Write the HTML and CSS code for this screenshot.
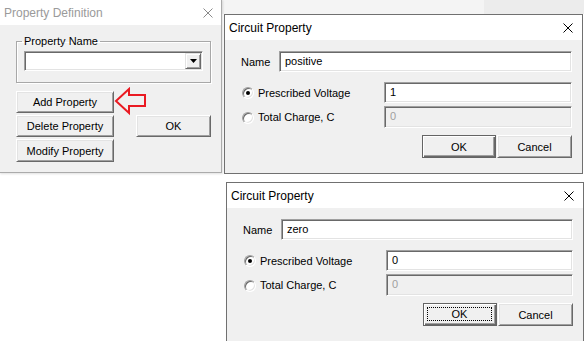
FILE: index.html
```html
<!DOCTYPE html>
<html>
<head>
<meta charset="utf-8">
<link rel="stylesheet" href="styles.css">
</head>
<body>
<div class="desk">
  <div class="backdrop"><div class="backdrop-right"></div></div>

  <div class="win win-def inactive">
    <div class="titlebar">
      <span class="title">Property Definition</span>
      <svg class="close" width="10" height="10" viewBox="0 0 10 10"><path d="M0.5 0.5 L9.5 9.5 M9.5 0.5 L0.5 9.5" /></svg>
    </div>
    <div class="def-body">
      <fieldset class="group">
        <legend>Property Name</legend>
        <div class="combo">
          <div class="combo-field"></div>
          <div class="combo-btn"><svg width="7" height="4" viewBox="0 0 7 4"><path d="M0 0 H7 L3.5 4 Z" fill="#000"/></svg></div>
        </div>
      </fieldset>
      <div class="btn-grid">
        <button class="btn b-add">Add Property</button>
        <button class="btn b-del">Delete Property</button>
        <button class="btn b-ok">OK</button>
        <button class="btn b-mod">Modify Property</button>
      </div>
    </div>
    <svg class="arrow" width="34" height="30" viewBox="113 87 34 30"><polygon points="116,101 129,89 129,95 145,95 145,106 129,106 129,113" fill="none" stroke="#ea1a22" stroke-width="2"/></svg>
  </div>

  <div class="win win-cp1">
    <div class="titlebar">
      <span class="title">Circuit Property</span>
      <svg class="close" width="10" height="10" viewBox="0 0 10 10"><path d="M0.5 0.5 L9.5 9.5 M9.5 0.5 L0.5 9.5" /></svg>
    </div>
    <div class="cp-body">
      <div class="row row-name">
        <span class="lbl-name">Name</span>
        <div class="field">positive</div>
      </div>
      <div class="row row-v">
        <div class="radio-lbl"><span class="radio checked"></span><span>Prescribed Voltage</span></div>
        <div class="field">1</div>
      </div>
      <div class="row row-c">
        <div class="radio-lbl"><span class="radio"></span><span>Total Charge, C</span></div>
        <div class="field disabled">0</div>
      </div>
      <div class="btn-row">
        <button class="btn btn-def">OK</button>
        <button class="btn">Cancel</button>
      </div>
    </div>
  </div>

  <div class="win win-cp2">
    <div class="titlebar">
      <span class="title">Circuit Property</span>
      <svg class="close" width="10" height="10" viewBox="0 0 10 10"><path d="M0.5 0.5 L9.5 9.5 M9.5 0.5 L0.5 9.5" /></svg>
    </div>
    <div class="cp-body">
      <div class="row row-name">
        <span class="lbl-name">Name</span>
        <div class="field">zero</div>
      </div>
      <div class="row row-v">
        <div class="radio-lbl"><span class="radio checked"></span><span>Prescribed Voltage</span></div>
        <div class="field">0</div>
      </div>
      <div class="row row-c">
        <div class="radio-lbl"><span class="radio"></span><span>Total Charge, C</span></div>
        <div class="field disabled">0</div>
      </div>
      <div class="btn-row">
        <button class="btn btn-def focus"><span class="focus-rect">OK</span></button>
        <button class="btn">Cancel</button>
      </div>
    </div>
  </div>
</div>
</body>
</html>
```

FILE: styles.css
```css
* { box-sizing: border-box; }
html, body { margin: 0; padding: 0; }
body {
  background: #fff;
  font-family: "Liberation Sans", Arial, sans-serif;
  font-size: 11px;
  color: #000;
  overflow: hidden;
}
.desk {
  position: relative;
  width: 584px;
  height: 341px;
  overflow: hidden;
  background: #fff;
}
.backdrop {
  position: absolute;
  left: 222px;
  top: 0;
  width: 362px;
  height: 14px;
  background: #f4f4f4;
  display: flex;
  justify-content: flex-end;
}
.backdrop-right {
  width: 100px;
  height: 100%;
  background: #ececec;
}

/* windows */
.win {
  position: absolute;
  display: flex;
  flex-direction: column;
  background: #f0f0f0;
  border: 1px solid #707070;
}
.win-def {
  left: -1px;
  top: -1px;
  width: 223px;
  height: 174px;
  border-color: #ababab;
  box-shadow: 1px 1px 2px rgba(0,0,0,0.12);
}
.win-cp1 {
  left: 224px;
  top: 14px;
  width: 359px;
  height: 160px;
}
.win-cp2 {
  left: 226px;
  top: 182px;
  width: 358px;
  height: 160px;
}

.titlebar {
  height: 25px;
  flex: none;
  background: #fff;
  display: flex;
  align-items: center;
  justify-content: space-between;
  padding: 0 9px 0 4px;
  font-size: 12px;
}
.win-def .titlebar { padding-right: 8px; }
.close path { stroke: #000; stroke-width: 1; fill: none; }
.inactive .title { color: #9a9a9a; }
.inactive .close path { stroke: #8a8a8a; }

/* property definition */
.def-body {
  padding: 10px 0 0 16px;
  display: flex;
  flex-direction: column;
}
.group {
  margin: 0;
  width: 195px;
  padding: 3px 7px 11px 7px;
  border: 1px solid #a8a8a8;
  box-shadow: 1px 1px 0 #fff, inset 1px 1px 0 #fff;
}
.group legend {
  padding: 0 2px;
  margin-left: -2px;
  line-height: 13px;
  font-size: 11px;
}
.combo {
  height: 20px;
  display: flex;
  align-items: stretch;
  background: #fff;
  border: 1px solid;
  border-color: #a0a0a0 #fff #fff #a0a0a0;
  box-shadow: inset 1px 1px 0 #696969, inset -1px -1px 0 #e3e3e3;
  padding: 1px 1px 1px 1px;
}
.combo-field { flex: 1; }
.combo-btn {
  width: 16px;
  background: #f0f0f0;
  border: 1px solid;
  border-color: #e3e3e3 #696969 #696969 #e3e3e3;
  box-shadow: inset 1px 1px 0 #fff, inset -1px -1px 0 #a0a0a0;
  display: flex;
  align-items: center;
  justify-content: center;
}
.btn-grid {
  margin-top: 8px;
  display: grid;
  grid-template-columns: 98px 75px;
  grid-template-rows: 22px 22px 23px;
  column-gap: 22px;
  row-gap: 2px;
}
.b-add { grid-column: 1; grid-row: 1; }
.b-del { grid-column: 1; grid-row: 2; }
.b-ok { grid-column: 2; grid-row: 2; }
.b-mod { grid-column: 1; grid-row: 3; }
.arrow {
  position: absolute;
  left: 113px;
  top: 87px;
}

/* buttons */
.btn {
  margin: 0;
  padding: 0;
  font-family: inherit;
  font-size: 11px;
  color: #000;
  background: #f0f0f0;
  border: 1px solid;
  border-color: #fff #696969 #696969 #fff;
  box-shadow: inset 1px 1px 0 #e3e3e3, inset -1px -1px 0 #a0a0a0;
  display: flex;
  align-items: center;
  justify-content: center;
}
.btn-def {
  border-color: #646464;
  box-shadow: inset 1px 1px 0 #fff, inset -1px -1px 0 #696969, inset -2px -2px 0 #a0a0a0;
}
.focus-rect {
  flex: 1;
  align-self: stretch;
  margin: 3px 4px 4px 3px;
  border: 1px dotted #000;
  display: flex;
  align-items: center;
  justify-content: center;
}

/* circuit property */
.cp-body {
  padding: 11px 10px 0 16px;
  display: flex;
  flex-direction: column;
}
.row {
  display: flex;
  align-items: center;
  height: 21px;
}
.row-v { margin-top: 10px; }
.row-c { margin-top: 3px; height: 22px; }
.lbl-name { width: 38px; }
.radio-lbl {
  width: 143px;
  display: flex;
  align-items: center;
}
.radio {
  width: 12px;
  height: 12px;
  margin: 1px 4px 0 1px;
  border-radius: 50%;
  background: #fff;
  border: 1px solid;
  border-color: #a0a0a0 #fff #fff #a0a0a0;
  box-shadow: inset 1px 1px 0 #696969, inset -1px -1px 0 #e3e3e3;
  display: flex;
  align-items: center;
  justify-content: center;
}
.radio.checked::after {
  content: "";
  width: 4px;
  height: 4px;
  border-radius: 50%;
  background: #000;
}
.field {
  flex: 1;
  height: 100%;
  background: #fff;
  border: 1px solid;
  border-color: #a0a0a0 #fff #fff #a0a0a0;
  box-shadow: inset 1px 1px 0 #696969, inset -1px -1px 0 #e3e3e3;
  padding: 0 5px 2px 5px;
  display: flex;
  align-items: center;
}
.field.disabled {
  background: #f0f0f0;
  color: #a0a0a0;
}
.btn-row {
  margin-top: 7px;
  display: flex;
  justify-content: flex-end;
  gap: 1px;
}
.btn-row .btn {
  width: 74px;
  height: 23px;
}
.btn-row .btn + .btn { width: 75px; }
```
